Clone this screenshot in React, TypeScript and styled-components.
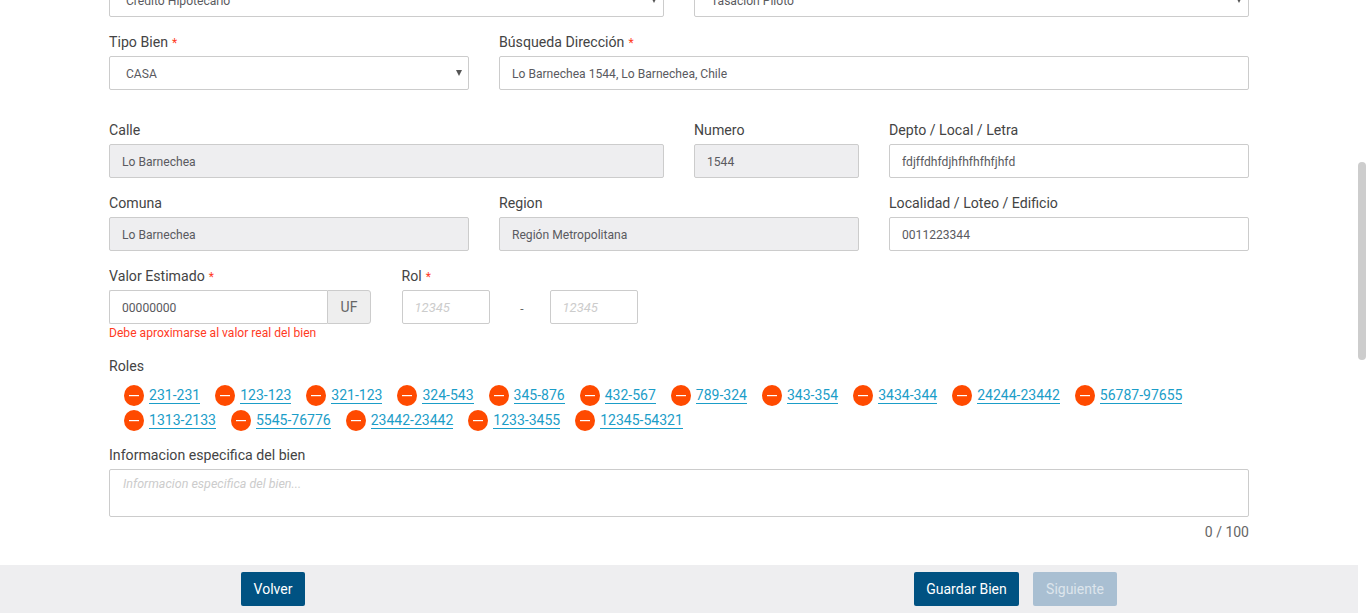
import React from "react";
import styled, { createGlobalStyle } from "styled-components";

const GlobalStyle = createGlobalStyle`
  html, body {
    margin: 0;
    padding: 0;
    height: 100%;
    overflow: hidden;
    background: #fff;
  }
  * { box-sizing: border-box; }
  body {
    font-family: Roboto, "Liberation Sans", sans-serif;
    color: #444;
  }
`;

const Page = styled.div`
  display: flex;
  width: 1366px;
  height: 613px;
  overflow: hidden;
`;

const Column = styled.div`
  flex: 1;
  display: flex;
  flex-direction: column;
  min-width: 0;
`;

const Content = styled.main`
  flex: 1;
  overflow: hidden;
  padding: 0 109px;
`;

const FormBody = styled.form`
  margin-top: -17px;
  width: 1140px;
`;

const Row = styled.div<{ $top?: number }>`
  display: grid;
  grid-template-columns: repeat(12, 1fr);
  column-gap: 30px;
  margin-top: ${({ $top }) => $top ?? 17}px;
`;

const Field = styled.div<{ $span: number }>`
  grid-column: span ${({ $span }) => $span};
  min-width: 0;
`;

const Label = styled.label`
  display: block;
  height: 22px;
  font-size: 14.15px;
  line-height: 16px;
  color: #444;
`;

const Required = styled.span`
  color: #ff3b1f;
  font-size: 12px;
  margin-left: 4px;
`;

const controlStyles = `
  display: block;
  width: 100%;
  height: 34px;
  border: 1px solid #ccc;
  border-radius: 2px;
  font-family: Roboto, "Liberation Sans", sans-serif;
  font-size: 12.1px;
  color: #5a5a60;
  outline: none;
`;

const Input = styled.input`
  ${controlStyles}
  padding: 2px 12px 0;
  background: #fff;

  &:read-only {
    background: #eeeef0;
  }

  &::placeholder {
    color: #ccc;
    font-size: 13px;
    font-style: italic;
  }
`;

const SelectWrap = styled.div`
  position: relative;

  &::after {
    content: "";
    position: absolute;
    top: 14px;
    right: 7px;
    border-left: 3px solid transparent;
    border-right: 3px solid transparent;
    border-top: 6px solid #555;
  }
`;

const Select = styled.select`
  ${controlStyles}
  appearance: none;
  padding: 2px 16px 0;
  background: #fff;
`;

const InputGroup = styled.div`
  display: flex;
  width: 262px;
`;

const GroupInput = styled(Input)`
  flex: 1;
  min-width: 0;
  border-right: 0;
  border-radius: 2px 0 0 2px;
`;

const Addon = styled.span`
  flex: 0 0 44px;
  display: flex;
  align-items: center;
  justify-content: center;
  height: 34px;
  font-size: 14px;
  color: #666;
  background: #eee;
  border: 1px solid #ccc;
  border-radius: 0 3px 3px 0;
`;

const Hint = styled.div`
  font-size: 12.1px;
  line-height: 14px;
  margin-top: 2px;
  color: #ff3b1f;
`;

const RolInputs = styled.div`
  display: flex;
  align-items: center;
`;

const RolInput = styled(Input)`
  flex: 0 0 88px;
  width: 88px;
`;

const RolDash = styled.span`
  flex: 0 0 60px;
  padding: 4px 0 0 5px;
  text-align: center;
  font-size: 12px;
  color: #666;
`;

const SectionLabel = styled.div<{ $top: number }>`
  margin-top: ${({ $top }) => $top}px;
  font-size: 14.15px;
  line-height: 20px;
  color: #444;
`;

const RoleList = styled.ul`
  display: flex;
  flex-wrap: wrap;
  column-gap: 15px;
  list-style: none;
  margin: 7px 0 0;
  padding: 0 0 0 15px;
  width: 1100px;
`;

const RoleItem = styled.li`
  display: flex;
  align-items: center;
  gap: 5px;
  height: 25px;
`;

const RemoveIcon = styled.svg`
  display: block;
  width: 20px;
  height: 21px;
`;

const RoleLink = styled.a`
  font-size: 14.03px;
  line-height: 16px;
  color: #1b9dc8;
  border-bottom: 1px solid #1b9dc8;
`;

const TextArea = styled.textarea`
  ${controlStyles}
  height: 48px;
  margin-top: 4px;
  padding: 6px 13px 2px;
  line-height: 16px;
  resize: none;
  background: #fff;

  &::placeholder {
    color: #ccc;
    font-size: 12.5px;
    font-style: italic;
  }
`;

const Counter = styled.div`
  margin-top: 6px;
  text-align: right;
  font-size: 14px;
  line-height: 18px;
  color: #666;
`;

const Footer = styled.footer`
  flex: 0 0 48px;
  display: flex;
  align-items: center;
  gap: 14px;
  padding: 0 241px;
  background: #eeeef0;
`;

const Button = styled.button<{ $disabled?: boolean; $width: number }>`
  width: ${({ $width }) => $width}px;
  height: 34px;
  padding: 0;
  border: 0;
  border-radius: 2px;
  font-family: Roboto, "Liberation Sans", sans-serif;
  font-size: 14px;
  color: ${({ $disabled }) => ($disabled ? "#dde5ec" : "#fff")};
  background: ${({ $disabled }) => ($disabled ? "#a9bfd2" : "#005282")};
`;

const Spacer = styled.div`
  flex: 1;
`;

const ScrollTrack = styled.div`
  flex: 0 0 8px;
  padding-top: 162px;
`;

const ScrollThumb = styled.div`
  height: 198px;
  border-radius: 4px;
  background: #cdcdcd;
`;

const roles = [
  "231-231",
  "123-123",
  "321-123",
  "324-543",
  "345-876",
  "432-567",
  "789-324",
  "343-354",
  "3434-344",
  "24244-23442",
  "56787-97655",
  "1313-2133",
  "5545-76776",
  "23442-23442",
  "1233-3455",
  "12345-54321",
];

const MinusCircle = () => (
  <RemoveIcon viewBox="0 0 20 21" aria-hidden="true">
    <ellipse cx="10" cy="10.5" rx="10" ry="10.5" fill="#ff4a00" />
    <rect x="5" y="10" width="10" height="1.2" fill="#fff" />
  </RemoveIcon>
);

const App: React.FC = () => {
  return (
    <Page>
      <GlobalStyle />
      <Column>
        <Content>
          <FormBody>
            <Row $top={0}>
              <Field $span={6}>
                <SelectWrap>
                  <Select defaultValue="hipotecario">
                    <option value="hipotecario">Credito Hipotecario</option>
                  </Select>
                </SelectWrap>
              </Field>
              <Field $span={6}>
                <SelectWrap>
                  <Select defaultValue="piloto">
                    <option value="piloto">Tasación Piloto</option>
                  </Select>
                </SelectWrap>
              </Field>
            </Row>

            <Row>
              <Field $span={4}>
                <Label>
                  Tipo Bien<Required>*</Required>
                </Label>
                <SelectWrap>
                  <Select defaultValue="casa">
                    <option value="casa">CASA</option>
                  </Select>
                </SelectWrap>
              </Field>
              <Field $span={8}>
                <Label>
                  Búsqueda Dirección<Required>*</Required>
                </Label>
                <Input defaultValue="Lo Barnechea 1544, Lo Barnechea, Chile" />
              </Field>
            </Row>

            <Row $top={32}>
              <Field $span={6}>
                <Label>Calle</Label>
                <Input readOnly value="Lo Barnechea" />
              </Field>
              <Field $span={2}>
                <Label>Numero</Label>
                <Input readOnly value="1544" />
              </Field>
              <Field $span={4}>
                <Label>Depto / Local / Letra</Label>
                <Input defaultValue="fdjffdhfdjhfhfhfhfjhfd" />
              </Field>
            </Row>

            <Row>
              <Field $span={4}>
                <Label>Comuna</Label>
                <Input readOnly value="Lo Barnechea" />
              </Field>
              <Field $span={4}>
                <Label>Region</Label>
                <Input readOnly value="Región Metropolitana" />
              </Field>
              <Field $span={4}>
                <Label>Localidad / Loteo / Edificio</Label>
                <Input defaultValue="0011223344" />
              </Field>
            </Row>

            <Row>
              <Field $span={3}>
                <Label>
                  Valor Estimado<Required>*</Required>
                </Label>
                <InputGroup>
                  <GroupInput defaultValue="00000000" />
                  <Addon>UF</Addon>
                </InputGroup>
                <Hint>Debe aproximarse al valor real del bien</Hint>
              </Field>
              <Field $span={3}>
                <Label>
                  Rol<Required>*</Required>
                </Label>
                <RolInputs>
                  <RolInput placeholder="12345" />
                  <RolDash>-</RolDash>
                  <RolInput placeholder="12345" />
                </RolInputs>
              </Field>
            </Row>

            <SectionLabel $top={16}>Roles</SectionLabel>
            <RoleList>
              {roles.map((role) => (
                <RoleItem key={role}>
                  <MinusCircle />
                  <RoleLink>{role}</RoleLink>
                </RoleItem>
              ))}
            </RoleList>

            <SectionLabel $top={12}>Informacion especifica del bien</SectionLabel>
            <TextArea placeholder="Informacion especifica del bien..." />
            <Counter>0 / 100</Counter>
          </FormBody>
        </Content>
        <Footer>
          <Button $width={64}>Volver</Button>
          <Spacer />
          <Button $width={105}>Guardar Bien</Button>
          <Button $disabled $width={84}>
            Siguiente
          </Button>
        </Footer>
      </Column>
      <ScrollTrack>
        <ScrollThumb />
      </ScrollTrack>
    </Page>
  );
};

export default App;
